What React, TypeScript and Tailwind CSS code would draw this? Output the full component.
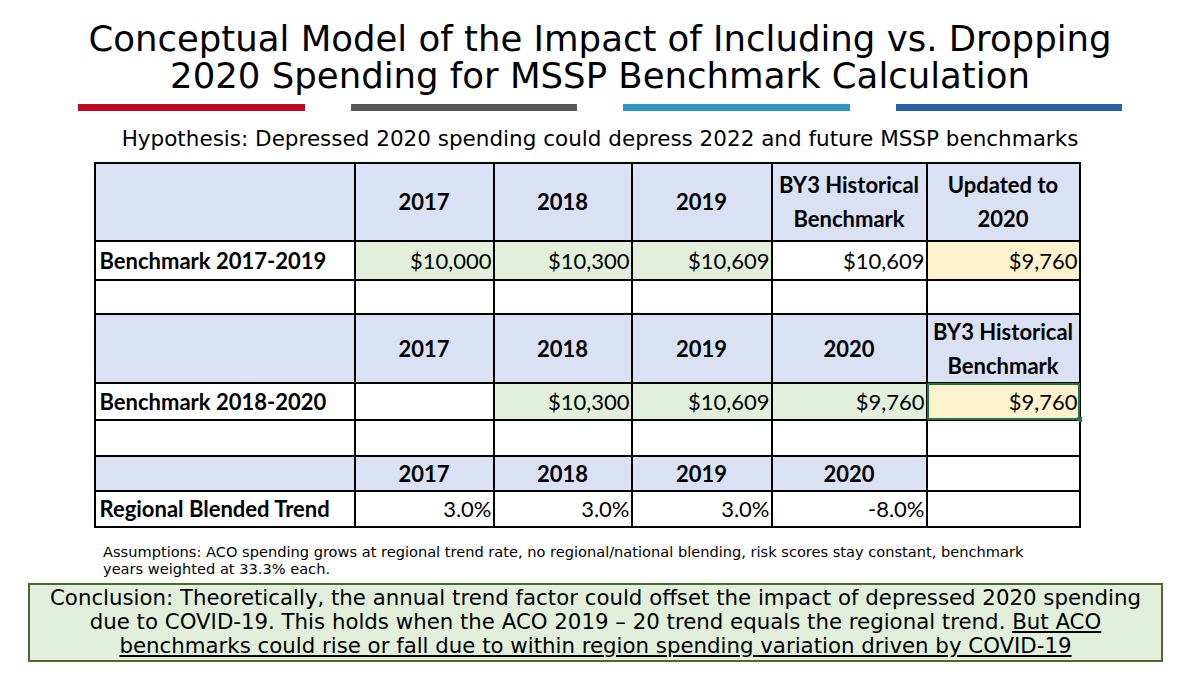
const cols = "grid-cols-[258px_137px_136px_138px_153px_151px]"

type Cell = {
  text?: string
  kind?: "head" | "label" | "num" | "empty"
  bg?: string
  selected?: boolean
}

const H = "bg-[#d9e1f2]"
const G = "bg-[#e2efda]"
const Y = "bg-[#fff2cc]"
const W = "bg-white"

const rows: { h: string; cells: Cell[] }[] = [
  {
    h: "h-[76px]",
    cells: [
      { kind: "head", bg: H },
      { text: "2017", kind: "head", bg: H },
      { text: "2018", kind: "head", bg: H },
      { text: "2019", kind: "head", bg: H },
      { text: "BY3 Historical\nBenchmark", kind: "head", bg: H },
      { text: "Updated to\n2020", kind: "head", bg: H },
    ],
  },
  {
    h: "h-[37px]",
    cells: [
      { text: "Benchmark 2017-2019", kind: "label", bg: W },
      { text: "$10,000", kind: "num", bg: G },
      { text: "$10,300", kind: "num", bg: G },
      { text: "$10,609", kind: "num", bg: G },
      { text: "$10,609", kind: "num", bg: W },
      { text: "$9,760", kind: "num", bg: Y },
    ],
  },
  { h: "h-[32px]", cells: Array.from({ length: 6 }, () => ({ kind: "empty" as const, bg: W })) },
  {
    h: "h-[67px]",
    cells: [
      { kind: "head", bg: H },
      { text: "2017", kind: "head", bg: H },
      { text: "2018", kind: "head", bg: H },
      { text: "2019", kind: "head", bg: H },
      { text: "2020", kind: "head", bg: H },
      { text: "BY3 Historical\nBenchmark", kind: "head", bg: H },
    ],
  },
  {
    h: "h-[35px]",
    cells: [
      { text: "Benchmark 2018-2020", kind: "label", bg: W },
      { kind: "empty", bg: W },
      { text: "$10,300", kind: "num", bg: G },
      { text: "$10,609", kind: "num", bg: G },
      { text: "$9,760", kind: "num", bg: G },
      { text: "$9,760", kind: "num", bg: Y, selected: true },
    ],
  },
  { h: "h-[34px]", cells: Array.from({ length: 6 }, () => ({ kind: "empty" as const, bg: W })) },
  {
    h: "h-[33px]",
    cells: [
      { kind: "head", bg: H },
      { text: "2017", kind: "head", bg: H },
      { text: "2018", kind: "head", bg: H },
      { text: "2019", kind: "head", bg: H },
      { text: "2020", kind: "head", bg: H },
      { kind: "head", bg: W },
    ],
  },
  {
    h: "h-[34px]",
    cells: [
      { text: "Regional Blended Trend", kind: "label", bg: W },
      { text: "3.0%", kind: "num", bg: W },
      { text: "3.0%", kind: "num", bg: W },
      { text: "3.0%", kind: "num", bg: W },
      { text: "-8.0%", kind: "num", bg: W },
      { kind: "empty", bg: W },
    ],
  },
]

function TableCell({ cell, h }: { cell: Cell; h: string }) {
  let align = "justify-center text-center"
  if (cell.kind === "label") align = "justify-start pl-[4px] font-bold"
  if (cell.kind === "num") align = "justify-end pr-[1px]"
  if (cell.kind === "head") align = "justify-center text-center font-bold"
  return (
    <div className={`relative flex items-center ${h} ${cell.bg} ${align} whitespace-pre-line leading-[34px]`}>
      {cell.text}
      {cell.selected && (
        <>
          <div className="absolute -inset-[1px] border-2 border-[#217346]" />
          <div className="absolute -bottom-[3px] -right-[3px] h-[5px] w-[5px] bg-[#217346]" />
        </>
      )}
    </div>
  )
}

export default function App() {
  return (
    <div className="flex h-[675px] w-[1200px] flex-col items-center bg-white pt-[20px] font-['DejaVu_Sans',sans-serif] text-black">
      <h1 className="text-center text-[35.5px] leading-[37px]">
        Conceptual Model of the Impact of Including vs. Dropping
        <br />
        2020 Spending for MSSP Benchmark Calculation
      </h1>

      <div className="mt-[10px] flex w-[1045px] justify-between">
        <div className="h-[7px] w-[227px] bg-[#be0a1a]" />
        <div className="h-[7px] w-[226px] bg-[#595959]" />
        <div className="h-[7px] w-[227px] bg-[#2e96c0]" />
        <div className="h-[7px] w-[226px] bg-[#2b5ea7]" />
      </div>

      <p className="mt-[15px] text-[21.5px] leading-[26px]">
        Hypothesis: Depressed 2020 spending could depress 2022 and future MSSP benchmarks
      </p>

      <div
        className={`mt-[10px] ml-[-26px] grid ${cols} gap-[2px] border-2 border-black bg-black font-['Lato',sans-serif] text-[22px]`}
      >
        {rows.map((r, i) =>
          r.cells.map((c, j) => <TableCell key={`${i}-${j}`} cell={c} h={r.h} />)
        )}
      </div>

      <p className="mt-[15px] self-start pl-[103px] text-[14.6px] leading-[17px]">
        Assumptions: ACO spending grows at regional trend rate, no regional/national blending, risk scores stay constant, benchmark
        <br />
        years weighted at 33.3% each.
      </p>

      <div className="mt-[6px] ml-[-9px] w-[1135px] border-2 border-[#4b6a30] bg-[#e2efda] px-[2px] pt-[1px] pb-[2px] text-center text-[21.3px] leading-[24px]">
        Conclusion: Theoretically, the annual trend factor could offset the impact of depressed 2020 spending
        <br />
        due to COVID-19. This holds when the ACO 2019 – 20 trend equals the regional trend.{" "}
        <span className="underline">But ACO</span>
        <br />
        <span className="underline">benchmarks could rise or fall due to within region spending variation driven by COVID-19</span>
      </div>
    </div>
  )
}
